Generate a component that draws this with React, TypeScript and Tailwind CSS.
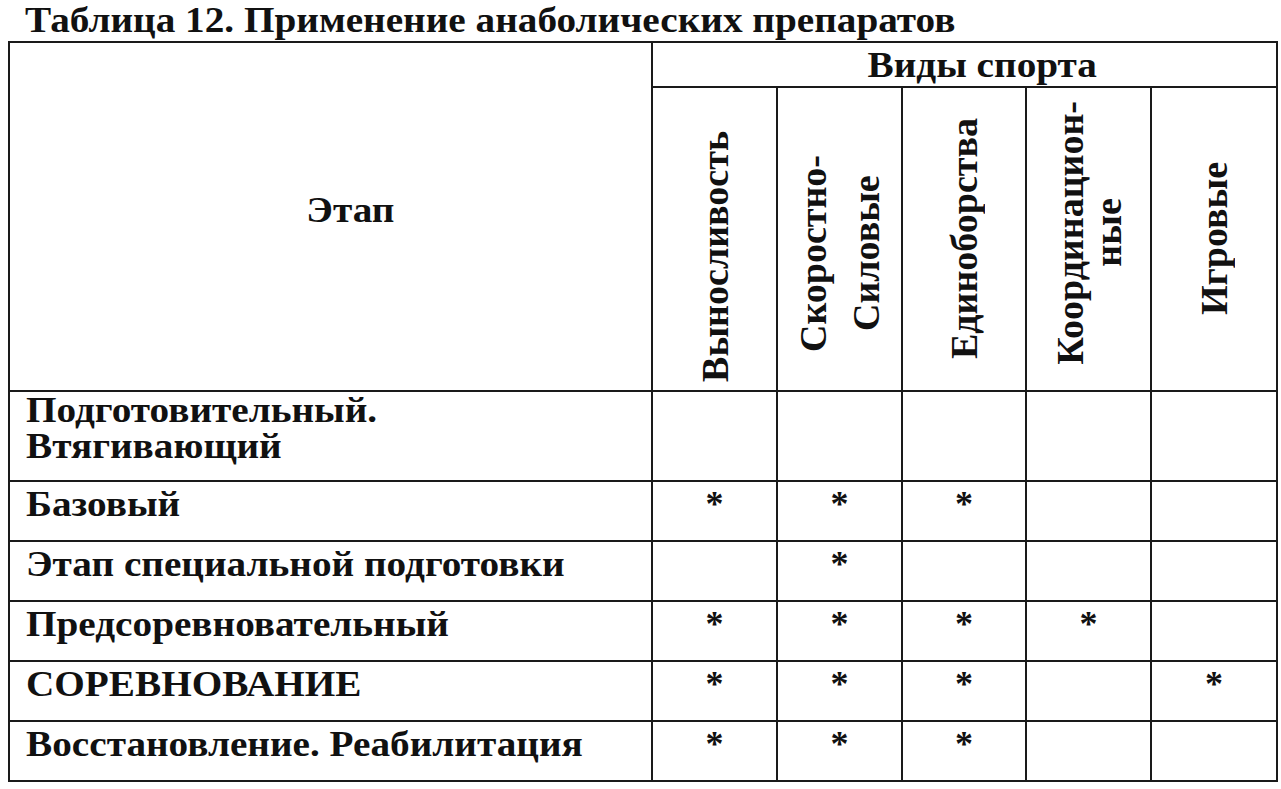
import React from "react";

// vertical headers: text lines, line spacing and a shift down from the cell centre
const sports: { lines: string[]; lh: string; shift: string }[] = [
  { lines: ["Выносливость"], lh: "leading-[38px]", shift: "mt-[34px]" },
  { lines: ["Скоростно-", "Силовые"], lh: "leading-[53px]", shift: "mt-[30px]" },
  { lines: ["Единоборства"], lh: "leading-[38px]", shift: "mt-0" },
  { lines: ["Координацион-", "ные"], lh: "leading-[38px]", shift: "mt-[-12px]" },
  { lines: ["Игровые"], lh: "leading-[38px]", shift: "mt-0" },
];

const rows: { label: string[]; marks: boolean[]; h: string; pt: string }[] = [
  { label: ["Подготовительный.", "Втягивающий"], marks: [false, false, false, false, false], h: "h-[90px]", pt: "pt-0" },
  { label: ["Базовый"], marks: [true, true, true, false, false], h: "h-[60px]", pt: "pt-[4px]" },
  { label: ["Этап специальной подготовки"], marks: [false, true, false, false, false], h: "h-[60px]", pt: "pt-[4px]" },
  { label: ["Предсоревновательный"], marks: [true, true, true, true, false], h: "h-[60px]", pt: "pt-[4px]" },
  { label: ["СОРЕВНОВАНИЕ"], marks: [true, true, true, false, true], h: "h-[60px]", pt: "pt-[4px]" },
  { label: ["Восстановление. Реабилитация"], marks: [true, true, true, false, false], h: "h-[60px]", pt: "pt-[4px]" },
];

export default function App() {
  return (
    <div className="w-[1281px] h-[789px] bg-white text-[#111] font-['Liberation_Serif',serif] font-bold overflow-hidden">
      <h1 className="pl-[25px] pt-[2px] h-[41px] text-[36px] leading-[36px] whitespace-nowrap">
        <span className="inline-block origin-left scale-x-[1.09]">
          Таблица 12. Применение анаболических препаратов
        </span>
      </h1>
      <table className="ml-[8px] w-[1268px] table-fixed border-collapse border-2 border-[#1a1a1a] text-[36px] leading-[36px]">
        <colgroup>
          <col className="w-[643px]" />
          <col className="w-[125px]" />
          <col className="w-[125px]" />
          <col className="w-[124px]" />
          <col className="w-[125px]" />
          <col className="w-[126px]" />
        </colgroup>
        <thead>
          <tr className="h-[45px]">
            <th rowSpan={2} className="border-2 border-[#1a1a1a] align-middle text-center font-bold pl-[40px] pb-[14px]">
              <span className="inline-block scale-x-[1.09]">Этап</span>
            </th>
            <th colSpan={5} className="border-2 border-[#1a1a1a] text-center font-bold align-middle pl-[36px] p-0">
              <span className="inline-block scale-x-[1.09]">Виды спорта</span>
            </th>
          </tr>
          <tr className="h-[304px]">
            {sports.map((s, i) => (
              <th key={i} className="border-2 border-[#1a1a1a] align-middle font-bold p-0">
                <div className={`flex justify-center ${s.shift}`}>
                  <div className={`[writing-mode:vertical-rl] rotate-180 text-center whitespace-nowrap text-[38px] ${s.lh}`}>
                    {s.lines.map((line, j) => (
                      <div key={j}>{line}</div>
                    ))}
                  </div>
                </div>
              </th>
            ))}
          </tr>
        </thead>
        <tbody>
          {rows.map((r, i) => (
            <tr key={i} className={r.h}>
              <td className={`border-2 border-[#1a1a1a] align-top pl-[16px] whitespace-nowrap ${r.pt}`}>
                <div className="origin-left scale-x-[1.09]">
                  {r.label.map((l, j) => (
                    <div key={j}>{l}</div>
                  ))}
                </div>
              </td>
              {r.marks.map((m, j) => (
                <td key={j} className="border-2 border-[#1a1a1a] align-top text-center pt-[4px]">
                  {m ? "*" : ""}
                </td>
              ))}
            </tr>
          ))}
        </tbody>
      </table>
    </div>
  );
}
